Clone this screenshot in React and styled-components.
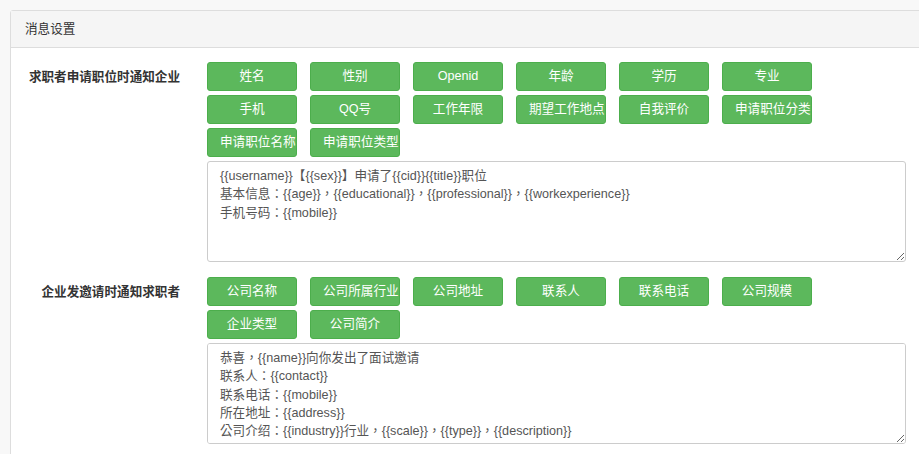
import React from 'react';
import styled, { createGlobalStyle } from 'styled-components';

const GlobalStyle = createGlobalStyle`
  html, body {
    margin: 0;
    padding: 0;
    background: #f8f8f8;
    overflow: hidden;
  }
  body {
    font-family: "Liberation Sans", "Noto Sans CJK SC", sans-serif;
    font-size: 12.6px;
    color: #333;
  }
`;

const Page = styled.div`
  padding: 10px 0 0 10px;
`;

const Panel = styled.div`
  width: 930px;
  background: #fff;
  border: 1px solid #ddd;
  border-radius: 3px;
`;

const PanelHeading = styled.div`
  background: #f5f5f5;
  border-bottom: 1px solid #ddd;
  padding: 10px 14px;
  line-height: 16px;
  color: #333;
`;

const PanelBody = styled.div`
  padding: 14px 0 10px 0;
`;

const FormRow = styled.div`
  display: flex;
  align-items: flex-start;
  margin-bottom: 15px;
`;

const Label = styled.div`
  width: 196px;
  box-sizing: border-box;
  padding-right: 27px;
  text-align: right;
  font-weight: bold;
  line-height: 30px;
  color: #333;
  white-space: nowrap;
`;

const Field = styled.div`
  width: 699px;
`;

const ButtonGroup = styled.div`
  display: flex;
  flex-wrap: wrap;
  gap: 4px 13px;
  margin-bottom: 4px;
`;

const TagButton = styled.button`
  display: block;
  width: 90px;
  height: 29px;
  box-sizing: border-box;
  padding: 0 12px;
  background: #5cb85c;
  border: 1px solid #4cae4c;
  border-radius: 3px;
  color: #fff;
  font-family: inherit;
  font-size: 12.6px;
  line-height: 27px;
  text-align: center;
  white-space: nowrap;
  cursor: pointer;
`;

const TextArea = styled.textarea`
  display: block;
  width: 699px;
  height: 101px;
  box-sizing: border-box;
  padding: 5px 12px 4px;
  border: 1px solid #ccc;
  border-radius: 3px;
  font-family: "Liberation Sans", "Noto Sans CJK TC", sans-serif;
  font-size: 12.6px;
  line-height: 18.3px;
  color: #555;
  background: #fff;
  outline: none;
  resize: both;
`;

const sections = [
  {
    label: '求职者申请职位时通知企业',
    tags: ['姓名', '性别', 'Openid', '年龄', '学历', '专业', '手机', 'QQ号', '工作年限', '期望工作地点', '自我评价', '申请职位分类', '申请职位名称', '申请职位类型'],
    text: '{{username}}【{{sex}}】申请了{{cid}}{{title}}职位\n基本信息：{{age}}，{{educational}}，{{professional}}，{{workexperience}}\n手机号码：{{mobile}}',
  },
  {
    label: '企业发邀请时通知求职者',
    tags: ['公司名称', '公司所属行业', '公司地址', '联系人', '联系电话', '公司规模', '企业类型', '公司简介'],
    text: '恭喜，{{name}}向你发出了面试邀请\n联系人：{{contact}}\n联系电话：{{mobile}}\n所在地址：{{address}}\n公司介绍：{{industry}}行业，{{scale}}，{{type}}，{{description}}',
  },
];

export default function App() {
  return (
    <>
      <GlobalStyle />
      <Page>
        <Panel>
          <PanelHeading>消息设置</PanelHeading>
          <PanelBody>
            {sections.map((s) => (
              <FormRow key={s.label}>
                <Label>{s.label}</Label>
                <Field>
                  <ButtonGroup>
                    {s.tags.map((t) => (
                      <TagButton key={t} type="button">{t}</TagButton>
                    ))}
                  </ButtonGroup>
                  <TextArea defaultValue={s.text} spellCheck={false} />
                </Field>
              </FormRow>
            ))}
          </PanelBody>
        </Panel>
      </Page>
    </>
  );
}
